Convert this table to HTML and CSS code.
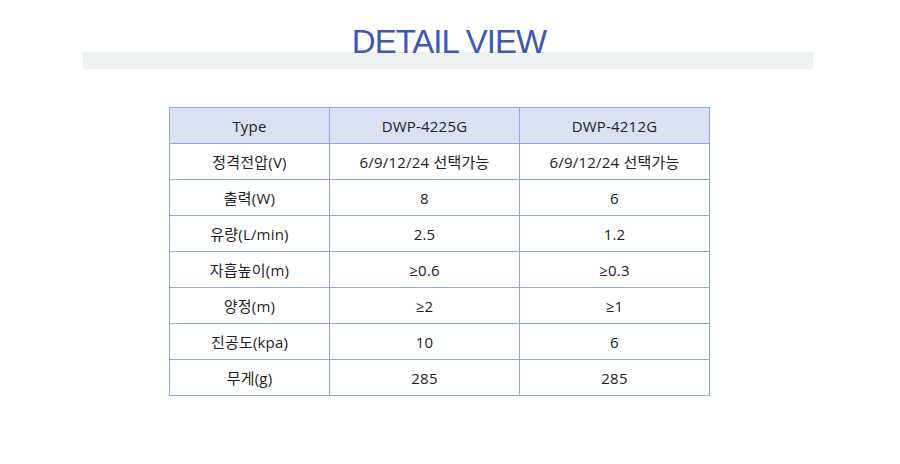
FILE: index.html
```html
<!DOCTYPE html>
<html lang="ko">
<head>
    <meta charset="UTF-8">
    <meta name="viewport" content="width=device-width, initial-scale=1.0">
    <title>Detail View</title>
    <link rel="stylesheet" href="styles.css">
</head>

<body>
    <div class="title-wrap">
        <h1>DETAIL VIEW</h1>
    </div>

    <table class="spec">
        <tr class="head">
            <th>Type</th>
            <th>DWP-4225G</th>
            <th>DWP-4212G</th>
        </tr>
        <tr>
            <td>정격전압(V)</td>
            <td>6/9/12/24 선택가능</td>
            <td>6/9/12/24 선택가능</td>
        </tr>
        <tr>
            <td>출력(W)</td>
            <td>8</td>
            <td>6</td>
        </tr>
        <tr>
            <td>유량(L/min)</td>
            <td>2.5</td>
            <td>1.2</td>
        </tr>
        <tr>
            <td>자흡높이(m)</td>
            <td>≥0.6</td>
            <td>≥0.3</td>
        </tr>
        <tr>
            <td>양정(m)</td>
            <td>≥2</td>
            <td>≥1</td>
        </tr>
        <tr>
            <td>진공도(kpa)</td>
            <td>10</td>
            <td>6</td>
        </tr>
        <tr>
            <td>무게(g)</td>
            <td>285</td>
            <td>285</td>
        </tr>
    </table>
</body>
</html>
```

FILE: styles.css
```css
*
{
    margin:0;
    padding:0;
    box-sizing: border-box;
}
body
{
    background:#fff;
    font-family:"Open Sans", "Noto Sans CJK KR", sans-serif;
    color:#222;
}
.title-wrap
{
    width:730px;
    height:69px;
    margin-left:83px;
    background:linear-gradient(transparent 52px, #eff2f3 52px);
    text-align:center;
}
h1
{
    padding-top:24px;
    padding-left:2px;
    font-family:"Liberation Sans", Arial, sans-serif;
    font-weight:400;
    font-size:33px;
    line-height:36px;
    color:#3d59b3;
    letter-spacing:-1px;
}
.spec
{
    margin:38px 0 0 169px;
    width:541px;
    border-collapse:collapse;
    font-size:15px;
    letter-spacing:0.2px;
}
.spec th, .spec td
{
    height:36px;
    border:1px solid #8fa8dc;
    text-align:center;
    font-weight:400;
    padding:0;
}
.spec th:first-child
{
    width:160px;
}
.spec th
{
    background:#d9e1f2;
}
```
